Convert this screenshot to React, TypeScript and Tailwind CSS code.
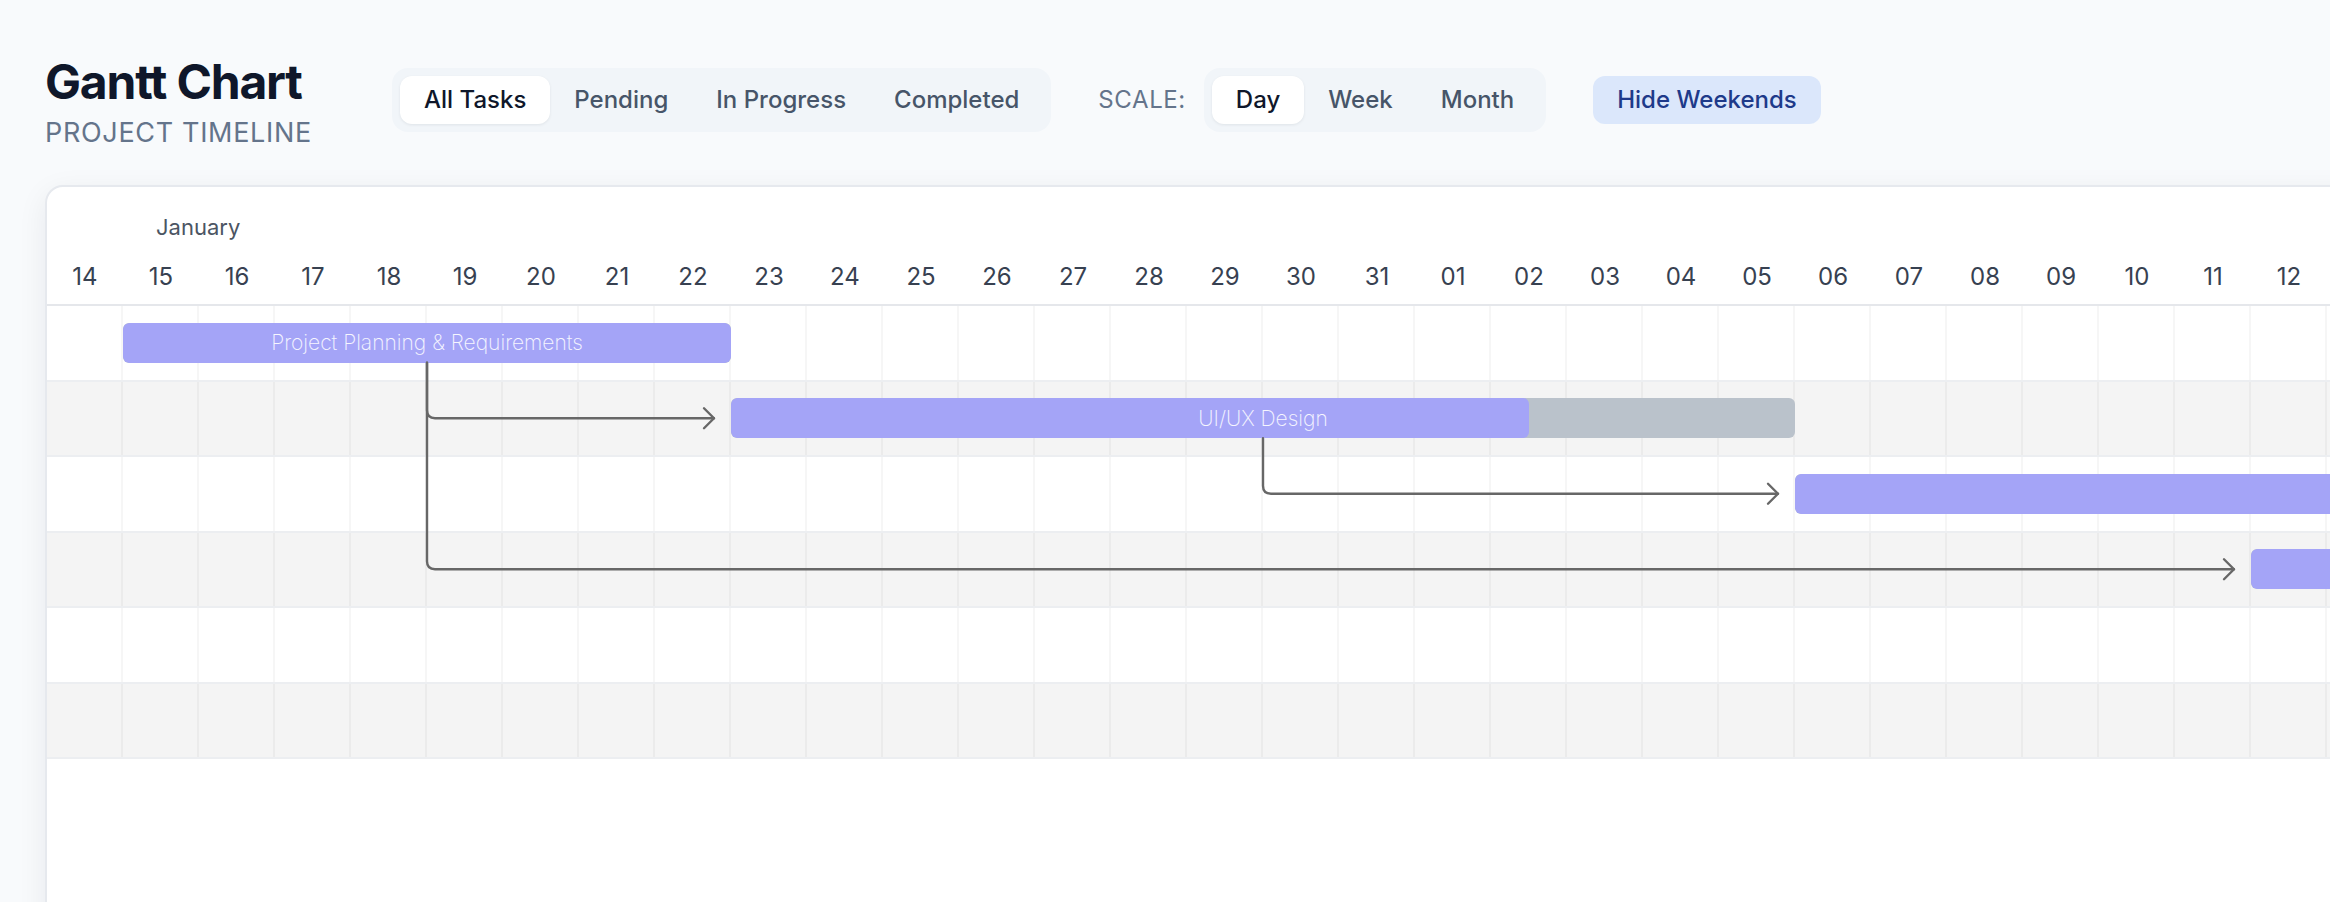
import type { CSSProperties } from "react";

type Task = {
  name: string;
  start: number;
  length: number;
  progress: number;
};

const COL = 76;
const ROW = 75.5;
const COLS = 31;

// 14 Jan .. 12 Feb, the last column runs off the right edge
const DAYS: string[] = [
  ...Array.from({ length: 18 }, (_, i) => String(14 + i)),
  ...Array.from({ length: 12 }, (_, i) => String(1 + i).padStart(2, "0")),
  "",
];

const ROWS: (Task | null)[] = [
  { name: "Project Planning & Requirements", start: 1, length: 8, progress: 1 },
  { name: "UI/UX Design", start: 9, length: 14, progress: 0.75 },
  { name: "", start: 23, length: 8, progress: 1 },
  { name: "", start: 29, length: 2, progress: 1 },
  null,
  null,
];

const FILTERS = ["All Tasks", "Pending", "In Progress", "Completed"];
const SCALES = ["Day", "Week", "Month"];

function Segmented({ items, active }: { items: string[]; active: string }) {
  return (
    <div className="flex rounded-[16px] bg-[#f1f5f9] p-[8px]">
      {items.map((item) => (
        <button
          key={item}
          className={
            item === active
              ? "rounded-[12px] bg-white px-[24px] py-[6px] text-[24px] leading-[36px] font-medium text-[#0f172a] shadow-[0_1px_3px_rgba(15,23,42,0.08)]"
              : "rounded-[12px] px-[24px] py-[6px] text-[24px] leading-[36px] font-medium text-[#475569]"
          }
        >
          {item}
        </button>
      ))}
    </div>
  );
}

function Bar({ task, style }: { task: Task; style: CSSProperties }) {
  return (
    <div
      className="relative z-10 flex h-[40px] items-center justify-center self-center overflow-hidden rounded-[6px] bg-[#bac2cb]"
      style={style}
    >
      <div
        className="absolute inset-y-0 left-0 rounded-[6px] bg-[#a4a4f7]"
        style={{ width: `${task.progress * 100}%` }}
      />
      {task.name && (
        <span className="relative whitespace-nowrap text-[21px] font-extralight text-white/90">
          {task.name}
        </span>
      )}
    </div>
  );
}

// elbow connector from a bar's bottom centre to the left of a later bar
function Link({ from, to }: { from: number; to: number }) {
  const fromTask = ROWS[from]!;
  const toTask = ROWS[to]!;
  const x = (fromTask.start + fromTask.length / 2) * COL;
  const y0 = from * ROW + (ROW - 2) / 2 + 20;
  const y1 = to * ROW + (ROW - 2) / 2;
  const tip = toTask.start * COL - 17;
  const r = 8;
  return (
    <g>
      <path d={`M${x} ${y0} V${y1 - r} Q${x} ${y1} ${x + r} ${y1} H${tip}`} />
      <path d={`M${tip - 10} ${y1 - 10} L${tip} ${y1} L${tip - 10} ${y1 + 10}`} />
    </g>
  );
}

export default function App() {
  return (
    <div className="h-screen w-full overflow-hidden bg-[#f8fafc] pl-[45px] pt-[58px] font-[Inter,sans-serif]">
      <header className="flex items-start">
        <div className="w-[299px]">
          <h1 className="text-[48px] leading-[48px] font-bold tracking-tight text-[#0f172a]">
            Gantt Chart
          </h1>
          <p className="mt-[7px] text-[27px] leading-[40px] tracking-wide text-[#64748b] uppercase">
            Project Timeline
          </p>
        </div>

        <div className="mt-[10px] ml-[48px] flex items-center gap-[47px]">
          <Segmented items={FILTERS} active="All Tasks" />
          <div className="flex items-center gap-[18px]">
            <span className="text-[24px] tracking-wide text-[#64748b] uppercase">Scale:</span>
            <Segmented items={SCALES} active="Day" />
          </div>
          <button className="rounded-[12px] bg-[#dbe7fb] px-[24px] py-[6px] text-[24px] leading-[36px] font-medium text-[#1e3a8a]">
            Hide Weekends
          </button>
        </div>
      </header>

      <section className="mt-[32px] h-[760px] w-max overflow-hidden rounded-[18px] border-2 border-[#e6e9ee] bg-white shadow-[0_8px_30px_rgba(15,23,42,0.07)]">
        <div className="border-b-2 border-[#e5e7eb] pt-[24px] pb-[9px]">
          <div className="h-[33px] pl-[109px] text-[22px] leading-[33px] text-[#4b5563]">January</div>
          <div className="mt-[15px] flex h-[36px]">
            {DAYS.map((d, i) => (
              <div key={i} className="w-[76px] text-center text-[24px] leading-[36px] text-[#374151]">
                {d}
              </div>
            ))}
          </div>
        </div>

        <div className="relative">
          {ROWS.map((task, r) => (
            <div
              key={r}
              className={
                r % 2 === 0
                  ? "grid h-[75.5px] grid-cols-[repeat(31,76px)] border-b-2 border-[#eceef1] bg-white"
                  : "grid h-[75.5px] grid-cols-[repeat(31,76px)] border-b-2 border-[#eceef1] bg-[#f4f4f4]"
              }
            >
              {DAYS.map((_, i) => (
                <div
                  key={i}
                  className="self-stretch border-r-2 border-black/[0.035]"
                  style={{ gridRow: 1, gridColumn: i + 1 }}
                />
              ))}
              {task && (
                <Bar
                  task={task}
                  style={{ gridRow: 1, gridColumn: `${task.start + 1} / span ${task.length}` }}
                />
              )}
            </div>
          ))}

          <svg
            className="pointer-events-none absolute top-0 left-0 z-20"
            width={COLS * COL}
            height={ROWS.length * ROW}
            fill="none"
            stroke="#676767"
            strokeWidth={2.4}
            strokeLinecap="round"
            strokeLinejoin="round"
          >
            <Link from={0} to={1} />
            <Link from={1} to={2} />
            <Link from={0} to={3} />
          </svg>
        </div>
      </section>
    </div>
  );
}
